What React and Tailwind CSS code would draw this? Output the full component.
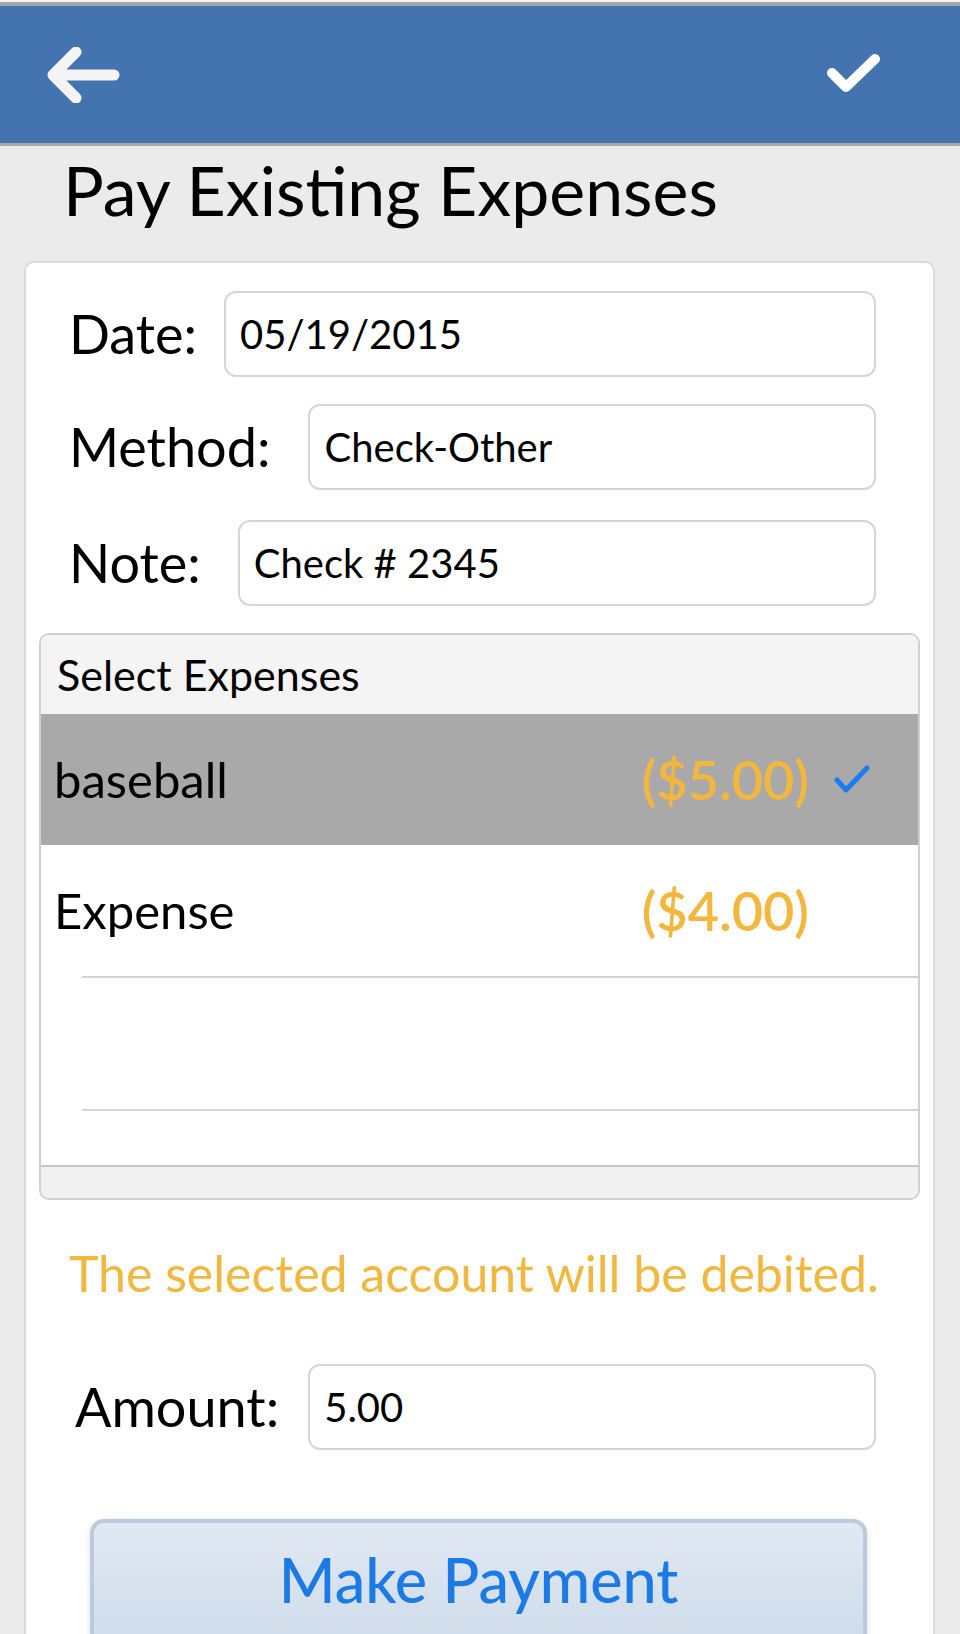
export default function App() {
  const expenses = [
    { name: "baseball", amount: "($5.00)", selected: true },
    { name: "Expense", amount: "($4.00)", selected: false },
    { name: "", amount: "", selected: false },
  ];

  return (
    <div className="w-[960px] h-[1634px] overflow-hidden bg-[#ebebeb] font-['Lato',sans-serif] text-black">
      {/* top bar */}
      <div className="h-[2px] bg-[#f4f4f4]" />
      <div className="h-[4px] bg-[#a6a6a6]" />
      <header className="h-[137px] bg-[#4374b0] flex items-center justify-between pl-[44px] pr-[78px]">
        <svg width="78" height="56" viewBox="0 0 78 56" fill="none">
          <path d="M9 28 H70 M32 5 L9 28 L32 51" stroke="#f4f4f6" strokeWidth="11" strokeLinecap="round" strokeLinejoin="round" />
        </svg>
        <svg width="56" height="44" viewBox="0 0 56 44" fill="none">
          <path d="M6 20 L20 34 L49 6" stroke="#ffffff" strokeWidth="10" strokeLinecap="round" strokeLinejoin="round" />
        </svg>
      </header>
      <div className="h-[3px] bg-[#a9a9a9]" />

      <h1 className="pl-[63px] pt-[10px] text-[68px] leading-none font-normal">Pay Existing Expenses</h1>

      {/* card */}
      <div className="mt-[37px] ml-[24px] w-[911px] h-[1400px] bg-white border-2 border-[#dadada] rounded-t-[10px]">
        <div className="pt-[28px] flex items-center pl-[43px] pr-[57px]">
          <span className="text-[54px] leading-none">Date:</span>
          <Field value="05/19/2015" className="ml-[27px]" />
        </div>
        <div className="mt-[27px] flex items-center pl-[43px] pr-[57px]">
          <span className="text-[54px] leading-none">Method:</span>
          <Field value="Check-Other" className="ml-[38px]" />
        </div>
        <div className="mt-[30px] flex items-center pl-[43px] pr-[57px]">
          <span className="text-[54px] leading-none">Note:</span>
          <Field value="Check # 2345" className="ml-[37px]" />
        </div>

        {/* expense list */}
        <div className="mt-[27px] mx-[13px] border-2 border-[#d0d0d0] rounded-[10px] overflow-hidden">
          <div className="h-[79px] bg-[#f4f4f4] flex items-center pl-[16px] text-[43px] leading-none">
            Select Expenses
          </div>
          {expenses.map((e, i) =>
            e.selected ? (
              <div key={i} className="h-[131px] bg-[#a9a9a9] flex items-center pl-[13px] pr-[48px]">
                <span className="text-[49px] leading-none">{e.name}</span>
                <span className="ml-auto text-[54px] leading-none font-semibold text-[#f3b73e]">{e.amount}</span>
                <span className="ml-[25px] w-[36px] flex justify-center">
                  <svg width="36" height="30" viewBox="0 0 36 30" fill="none">
                    <path d="M3 15 L12 25 L33 3" stroke="#1a7cf0" strokeWidth="5" strokeLinecap="round" strokeLinejoin="round" />
                  </svg>
                </span>
              </div>
            ) : (
              <div key={i}>
                <div className="h-[131px] flex items-center pl-[13px] pr-[48px]">
                  <span className="text-[49px] leading-none">{e.name}</span>
                  <span className="ml-auto text-[54px] leading-none font-semibold text-[#f3b73e]">{e.amount}</span>
                  <span className="ml-[25px] w-[36px]" />
                </div>
                <div className="ml-[41px] h-[2px] bg-[#d4d4d4]" />
              </div>
            )
          )}
          <div className="h-[54px]" />
          <div className="h-[2px] bg-[#c6c6c6]" />
          <div className="h-[31px] bg-[#f1f1f1]" />
        </div>

        <p className="mt-[48px] pl-[43px] text-[50px] leading-none text-[#f1b73e]">
          The selected account will be debited.
        </p>

        <div className="mt-[66px] flex items-center pl-[49px] pr-[57px]">
          <span className="text-[54px] leading-none">Amount:</span>
          <Field value="5.00" className="ml-[29px]" />
        </div>

        <button className="mt-[69px] ml-[64px] w-[777px] h-[160px] rounded-[14px] border-4 border-[#b9cbdc] bg-gradient-to-b from-[#e1e9f3] to-[#cad8e8] shadow-[0_2px_6px_rgba(0,0,0,0.12)] flex justify-center pt-[26px]">
          <span className="text-[61px] leading-none font-medium text-[#1b7ae6]">Make Payment</span>
        </button>
      </div>
    </div>
  );
}

function Field({ value, className }) {
  return (
    <div className={`flex-1 h-[86px] rounded-[12px] border-2 border-[#d6d6d6] bg-white flex items-center pl-[14px] text-[40px] leading-none ${className}`}>
      {value}
    </div>
  );
}
